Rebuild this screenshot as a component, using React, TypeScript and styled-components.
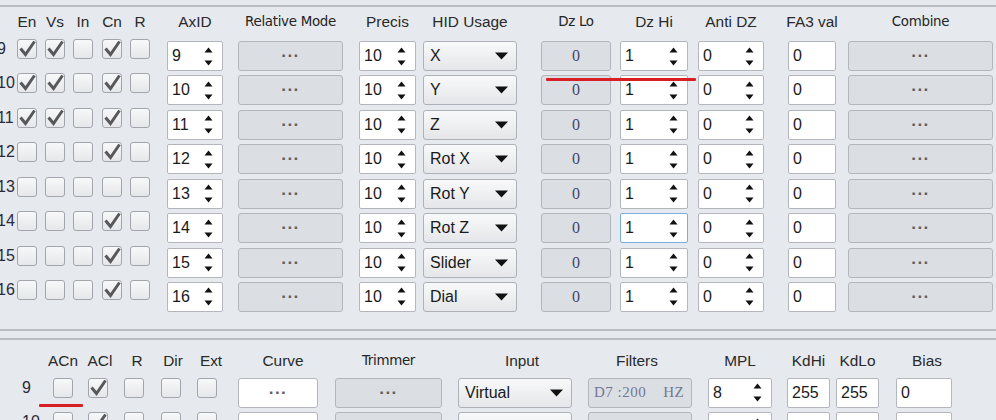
import React from 'react'
import styled, { createGlobalStyle } from 'styled-components'

const GlobalStyle = createGlobalStyle`
  html, body {
    margin: 0;
    padding: 0;
    background: #e6e9ed;
    overflow: hidden;
  }
  body {
    font-family: "Liberation Sans", Arial, sans-serif;
    font-size: 16px;
    color: #1e1e1e;
  }
`

const Page = styled.div`
  position: relative;
  width: 996px;
  height: 420px;
  overflow: hidden;
  padding-top: 5px;
  box-sizing: border-box;
`

const TopGroup = styled.section`
  border-top: 2px solid #b9bdc3;
  border-bottom: 2px solid #b9bdc3;
  padding-bottom: 17px;
`

const BottomGroup = styled.section`
  margin-top: 7px;
  border-top: 2px solid #b9bdc3;
  padding-top: 8px;
`

const Grid = styled.div<{ $cols: number[]; $head: number; $shift?: number }>`
  display: grid;
  grid-template-columns: ${p => p.$cols.map(c => c + 'px').join(' ')};
  grid-template-rows: ${p => p.$head}px;
  grid-auto-rows: 30px;
  row-gap: 4.43px;
  margin-left: ${p => p.$shift || 0}px;
`

const Head = styled.div<{ $w: number; $small?: boolean; $dx?: number }>`
  width: ${p => p.$w}px;
  display: flex;
  justify-content: center;
  align-items: center;
  white-space: nowrap;
  transform: translateX(${p => p.$dx || 0}px);
  font-family: ${p => (p.$small ? '"DejaVu Sans", Verdana, sans-serif' : '"Liberation Sans", Arial, sans-serif')};
  font-size: ${p => (p.$small ? '13.4px' : '15.4px')};
  letter-spacing: ${p => (p.$small ? '-0.3px' : '0')};
  color: ${p => (p.$small ? '#242424' : '#2a2a2a')};
`

const RowLabel = styled.div<{ $pad?: number; $dy?: number }>`
  align-self: start;
  margin-top: ${p => p.$dy || 0}px;
  padding-left: ${p => p.$pad || 0}px;
  line-height: 20px;
  font-size: 16px;
  color: #2c2a3a;
  white-space: nowrap;
`

const Box = styled.div<{ $dy?: number }>`
  align-self: start;
  margin-top: ${p => p.$dy || 0}px;
  width: 20px;
  height: 20px;
  box-sizing: border-box;
  border: 1px solid #a2a6ac;
  border-radius: 3px;
  background: linear-gradient(#f7f8f9, #e5e7ea);
  position: relative;
  svg {
    position: absolute;
    left: 0px;
    top: -1px;
  }
`

const Field = styled.div<{ $w: number; $focus?: boolean }>`
  width: ${p => p.$w}px;
  height: 30px;
  box-sizing: border-box;
  background: #fff;
  border: 1px solid ${p => (p.$focus ? '#78ade2' : '#b3b7bd')};
  border-radius: 2px;
  display: flex;
  align-items: center;
  justify-content: space-between;
  padding: 0 9px 0 4px;
  font-size: 16px;
  color: #1a1a1a;
`

const Combo = styled.div<{ $w: number }>`
  width: ${p => p.$w}px;
  height: 30px;
  box-sizing: border-box;
  background: linear-gradient(#f8f9fa, #e4e6e9);
  border: 1px solid #aeb2b8;
  border-radius: 3px;
  display: flex;
  align-items: center;
  justify-content: space-between;
  padding: 0 8px 0 6px;
  font-size: 16px;
  color: #1a1a1a;
`

const Button = styled.div<{ $w: number; $white?: boolean; $left?: boolean }>`
  width: ${p => p.$w}px;
  height: 30px;
  box-sizing: border-box;
  background: ${p => (p.$white ? '#fff' : '#dbdee3')};
  border: 1px solid #b3b7bd;
  border-radius: 3px;
  display: flex;
  align-items: center;
  justify-content: ${p => (p.$left ? 'flex-start' : 'center')};
  padding: 0 5px;
  color: #5e5e5e;
  font-size: 17px;
  font-weight: bold;
  letter-spacing: 0.5px;
`

const Zero = styled.span`
  font-family: "Liberation Serif", "Times New Roman", serif;
  font-size: 16px;
  font-weight: normal;
  color: #44466a;
  letter-spacing: 0;
`

const FilterText = styled.span`
  font-family: "Liberation Serif", "Times New Roman", serif;
  font-size: 15px;
  font-weight: normal;
  color: #737894;
  letter-spacing: 0.5px;
  white-space: pre;
`

const RedMark = styled.div<{ $x: number; $y: number; $w: number }>`
  position: absolute;
  left: ${p => p.$x}px;
  top: ${p => p.$y}px;
  width: ${p => p.$w}px;
  height: 3px;
  background: #d81f26;
  border-radius: 1px;
`

const Check = ({ on, dy }: { on: boolean; dy?: number }) => (
  <Box $dy={dy}>
    {on && (
      <svg width="19" height="20" viewBox="0 0 19 20">
        <path d="M2.5 9.5 L7.5 15.5 L16.5 2.5" fill="none" stroke="#56585b" strokeWidth="3" strokeLinejoin="miter" />
      </svg>
    )}
  </Box>
)

const SpinArrows = () => (
  <svg width="9" height="19" viewBox="0 0 9 19">
    <polygon points="0.5,5.5 4.5,0.5 8.5,5.5" fill="#111" />
    <polygon points="0.5,13.5 4.5,18.5 8.5,13.5" fill="#111" />
  </svg>
)

const DropArrow = () => (
  <svg width="13" height="8" viewBox="0 0 13 8">
    <polygon points="0,0.5 13,0.5 6.5,7.5" fill="#111" />
  </svg>
)

const Spin = ({ w, v, focus }: { w: number; v: string | number; focus?: boolean }) => (
  <Field $w={w} $focus={focus}>
    <span>{v}</span>
    <SpinArrows />
  </Field>
)

const Dots = () => <span>···</span>

const topCols = [20, 28, 28, 29, 28, 37, 71, 121, 64, 118, 79, 78, 90, 60, 150]
const bottomCols = [53, 35, 36, 37, 36, 41, 97, 123, 130, 120, 79, 49, 60, 100]

const axes = [
  { n: 9, c: [1, 1, 0, 1, 0], hid: 'X' },
  { n: 10, c: [1, 1, 0, 1, 0], hid: 'Y' },
  { n: 11, c: [1, 1, 0, 1, 0], hid: 'Z' },
  { n: 12, c: [0, 0, 0, 1, 0], hid: 'Rot X' },
  { n: 13, c: [0, 0, 0, 0, 0], hid: 'Rot Y' },
  { n: 14, c: [0, 0, 0, 1, 0], hid: 'Rot Z' },
  { n: 15, c: [0, 0, 0, 1, 0], hid: 'Slider' },
  { n: 16, c: [0, 0, 0, 1, 0], hid: 'Dial' },
]

const tuning = [
  { n: 9, c: [0, 1, 0, 0, 0], mpl: 8 },
  { n: 10, c: [0, 1, 0, 0, 0], mpl: 8 },
]

export default function App() {
  return (
    <>
      <GlobalStyle />
      <Page>
        <TopGroup>
          <Grid $cols={topCols} $head={29.6} $shift={-3}>
            <div />
            {['En', 'Vs', 'In', 'Cn', 'R'].map(h => (
              <Head key={h} $w={20}>{h}</Head>
            ))}
            <Head $w={56}>AxID</Head>
            <Head $w={105} $small>Relative Mode</Head>
            <Head $w={57}>Precis</Head>
            <Head $w={94}>HID Usage</Head>
            <Head $w={70} $small>Dz Lo</Head>
            <Head $w={68}>Dz Hi</Head>
            <Head $w={66}>Anti DZ</Head>
            <Head $w={48}>FA3 val</Head>
            <Head $w={145} $small>Combine</Head>

            {axes.map(a => (
              <React.Fragment key={a.n}>
                <RowLabel $dy={-2}>{a.n}</RowLabel>
                {a.c.map((on, i) => (
                  <Check key={i} on={!!on} dy={-2} />
                ))}
                <Spin w={56} v={a.n} />
                <Button $w={105}><Dots /></Button>
                <Spin w={57} v={10} />
                <Combo $w={94}>
                  <span>{a.hid}</span>
                  <DropArrow />
                </Combo>
                <Button $w={70}><Zero>0</Zero></Button>
                <Spin w={68} v={1} focus={a.n === 14} />
                <Spin w={66} v={0} />
                <Field $w={48}><span>0</span></Field>
                <Button $w={145}><Dots /></Button>
              </React.Fragment>
            ))}
          </Grid>
        </TopGroup>

        <BottomGroup>
          <Grid $cols={bottomCols} $head={25.6}>
            <div />
            <Head $w={20}>ACn</Head>
            <Head $w={20} $dx={2}>ACl</Head>
            <Head $w={20} $dx={3}>R</Head>
            <Head $w={20} $dx={2}>Dir</Head>
            <Head $w={20} $dx={4}>Ext</Head>
            <Head $w={80} $dx={5}>Curve</Head>
            <Head $w={107} $small>Trimmer</Head>
            <Head $w={114} $dx={7}>Input</Head>
            <Head $w={104} $dx={-3}>Filters</Head>
            <Head $w={64}>MPL</Head>
            <Head $w={43}>KdHi</Head>
            <Head $w={43}>KdLo</Head>
            <Head $w={56} $dx={3}>Bias</Head>

            {tuning.map(t => (
              <React.Fragment key={t.n}>
                <RowLabel $pad={22}>{t.n}</RowLabel>
                {t.c.map((on, i) => (
                  <Check key={i} on={!!on} />
                ))}
                <Button $w={80} $white><Dots /></Button>
                <Button $w={107}><Dots /></Button>
                <Combo $w={114}>
                  <span>Virtual</span>
                  <DropArrow />
                </Combo>
                <Button $w={104} $left>
                  <FilterText>{'D7 :200    HZ'}</FilterText>
                </Button>
                <Spin w={64} v={t.mpl} />
                <Field $w={43}><span>255</span></Field>
                <Field $w={43}><span>255</span></Field>
                <Field $w={56}><span>0</span></Field>
              </React.Fragment>
            ))}
          </Grid>
        </BottomGroup>

        <RedMark $x={546} $y={78} $w={150} />
        <RedMark $x={39} $y={404} $w={44} />
      </Page>
    </>
  )
}
